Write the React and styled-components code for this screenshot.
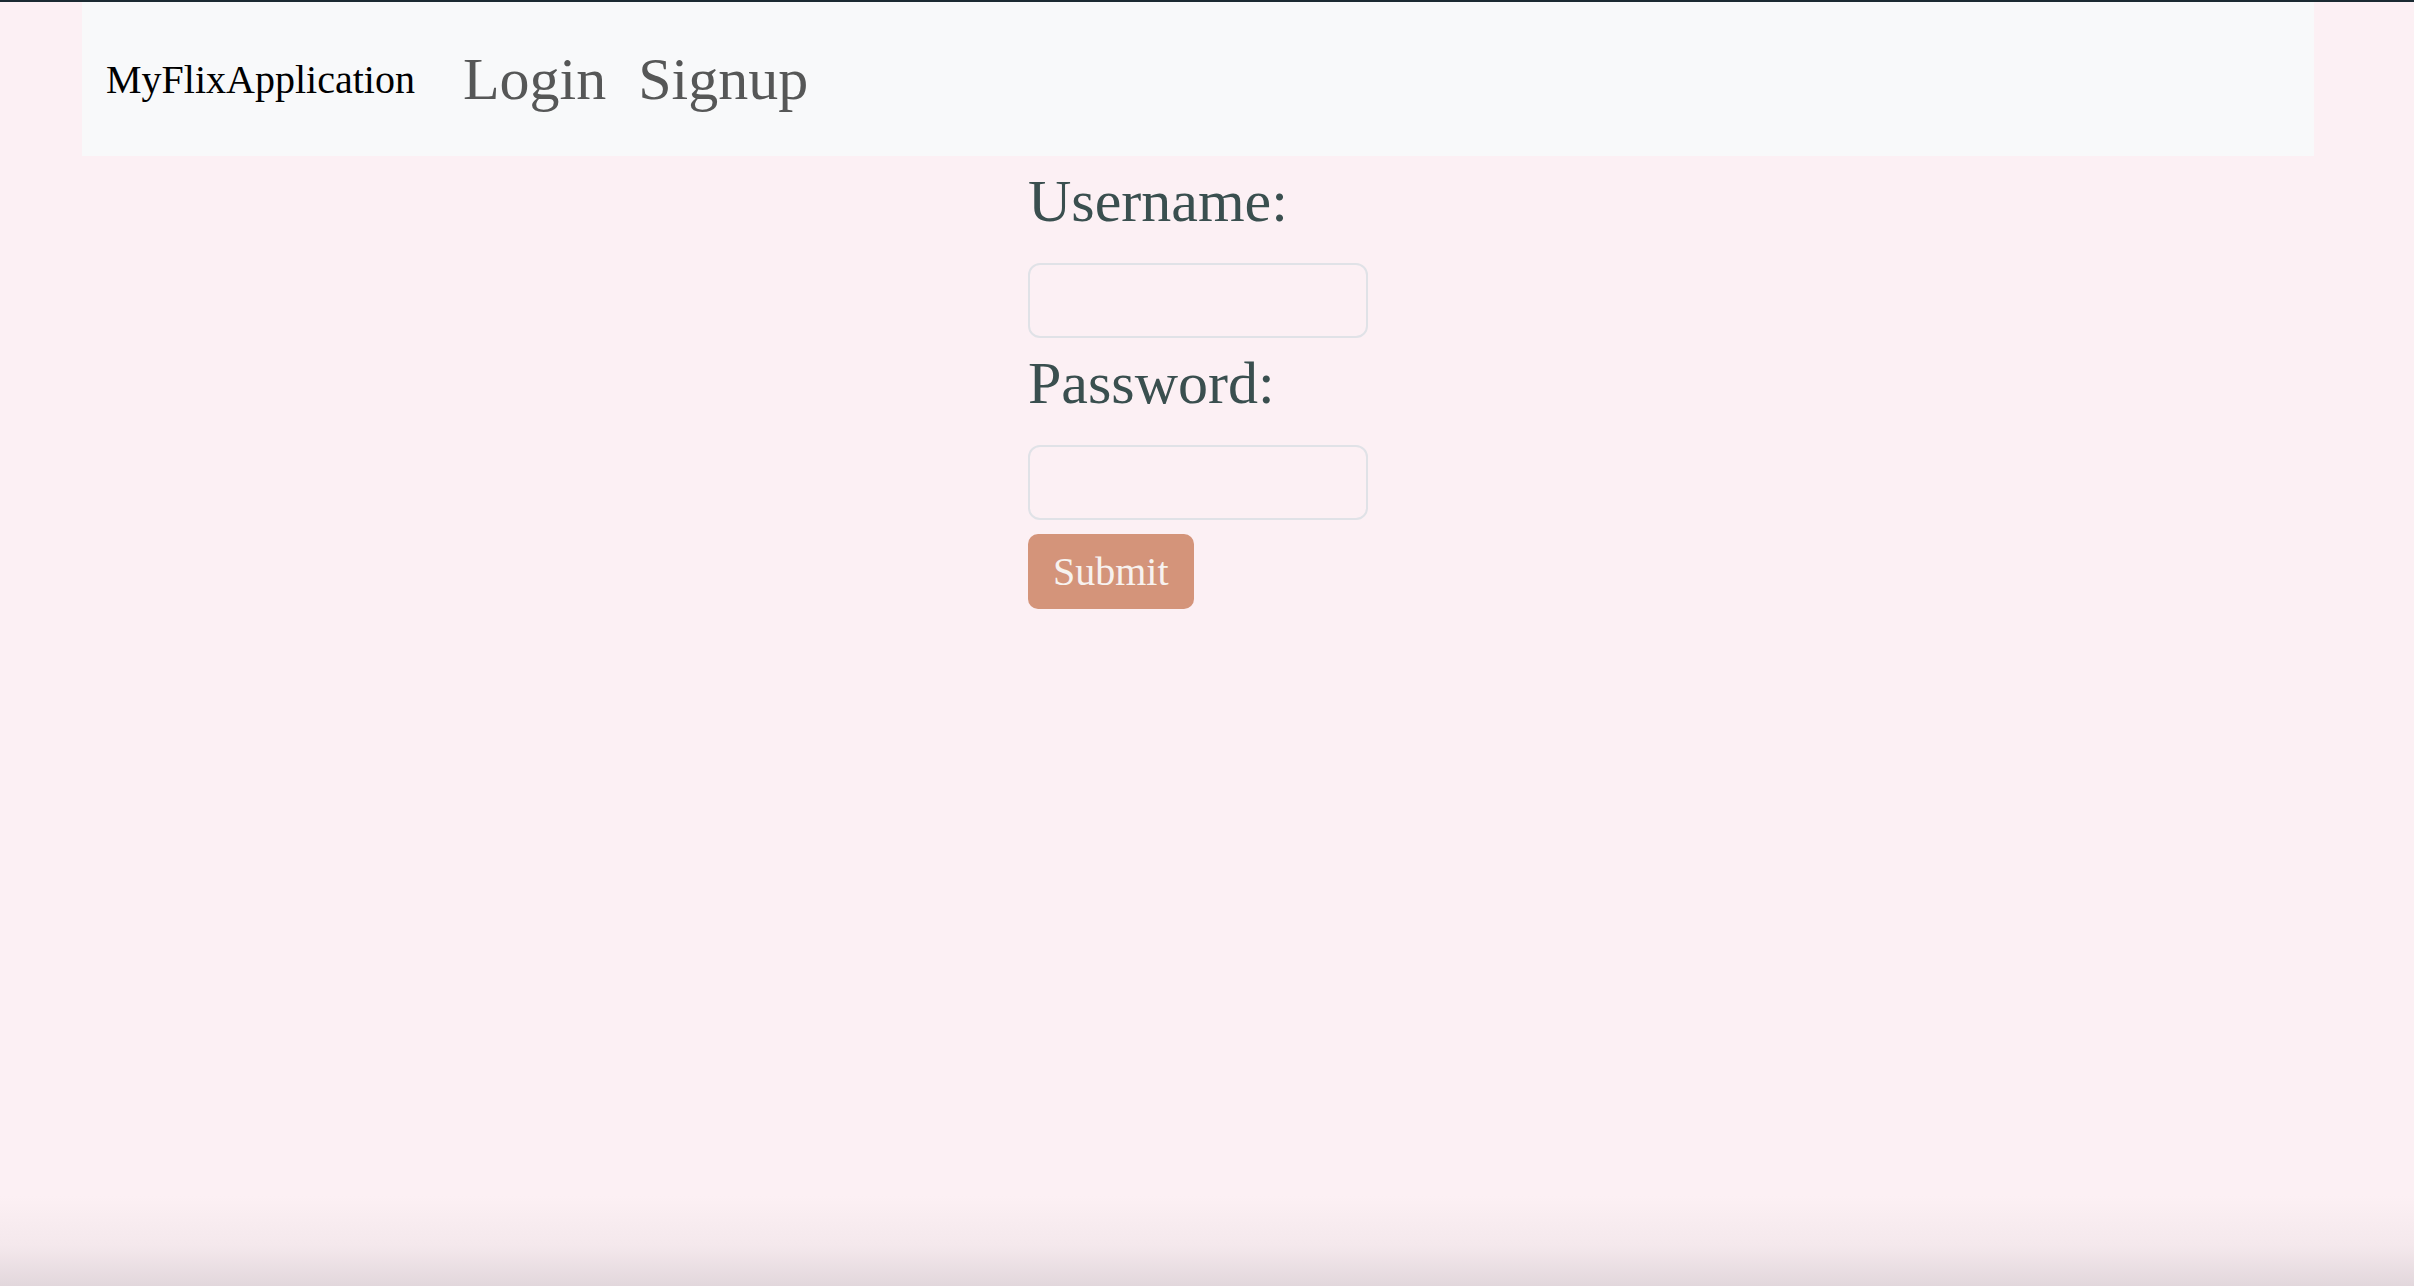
import React, { useState } from "react";
import styled, { createGlobalStyle } from "styled-components";

const GlobalStyle = createGlobalStyle`
  html, body {
    margin: 0;
    min-height: 100vh;
  }
  body {
    font-family: "Liberation Serif", "Times New Roman", serif;
    background: linear-gradient(
      to bottom,
      #fcf0f4 0,
      #fcf0f4 calc(100% - 90px),
      #f4e8ec calc(100% - 40px),
      #e2d7dc 100%
    );
    background-attachment: fixed;
  }
`;

const Page = styled.div`
  min-height: 100vh;
  box-sizing: border-box;
  border-top: 2px solid #1b2a32;
  padding: 0 100px 0 82px;
`;

const Navbar = styled.nav`
  height: 154px;
  background: #f8f9fa;
  display: flex;
  align-items: center;
  padding: 0 24px;
`;

const Brand = styled.a`
  font-size: 40px;
  color: #000;
  text-decoration: none;
  margin-right: 32px;
  cursor: pointer;
`;

const NavLink = styled.a`
  font-size: 60px;
  color: #565757;
  text-decoration: none;
  padding: 0 16px;
  cursor: pointer;
  &:hover {
    color: #222;
  }
`;

const Main = styled.main`
  display: flex;
  justify-content: center;
`;

const Form = styled.form`
  width: 340px;
  display: flex;
  flex-direction: column;
  align-items: flex-start;
`;

const Label = styled.label`
  font-size: 60px;
  line-height: 90px;
  color: #3a4f4f;
  margin-bottom: 17px;
`;

const Input = styled.input`
  box-sizing: border-box;
  width: 340px;
  height: 75px;
  padding: 12px 24px;
  font-family: inherit;
  font-size: 32px;
  color: #212529;
  background: transparent;
  border: 2px solid #e0e2e7;
  border-radius: 12px;
  outline: none;
  &:focus {
    border-color: #d4947a;
  }
`;

const SubmitButton = styled.button`
  margin-top: 14px;
  height: 75px;
  padding: 0 25px;
  font-family: inherit;
  font-size: 40px;
  color: #f7f2ef;
  background: #d4947a;
  border: none;
  border-radius: 10px;
  cursor: pointer;
`;

const App = () => {
  const [username, setUsername] = useState("");
  const [password, setPassword] = useState("");

  const handleSubmit = (e) => {
    e.preventDefault();
  };

  return (
    <>
      <GlobalStyle />
      <Page>
        <Navbar>
          <Brand>MyFlixApplication</Brand>
          <NavLink>Login</NavLink>
          <NavLink>Signup</NavLink>
        </Navbar>
        <Main>
          <Form onSubmit={handleSubmit}>
            <Label htmlFor="username">Username:</Label>
            <Input
              id="username"
              type="text"
              value={username}
              onChange={(e) => setUsername(e.target.value)}
            />
            <Label htmlFor="password">Password:</Label>
            <Input
              id="password"
              type="password"
              value={password}
              onChange={(e) => setPassword(e.target.value)}
            />
            <SubmitButton type="submit">Submit</SubmitButton>
          </Form>
        </Main>
      </Page>
    </>
  );
};

export default App;
